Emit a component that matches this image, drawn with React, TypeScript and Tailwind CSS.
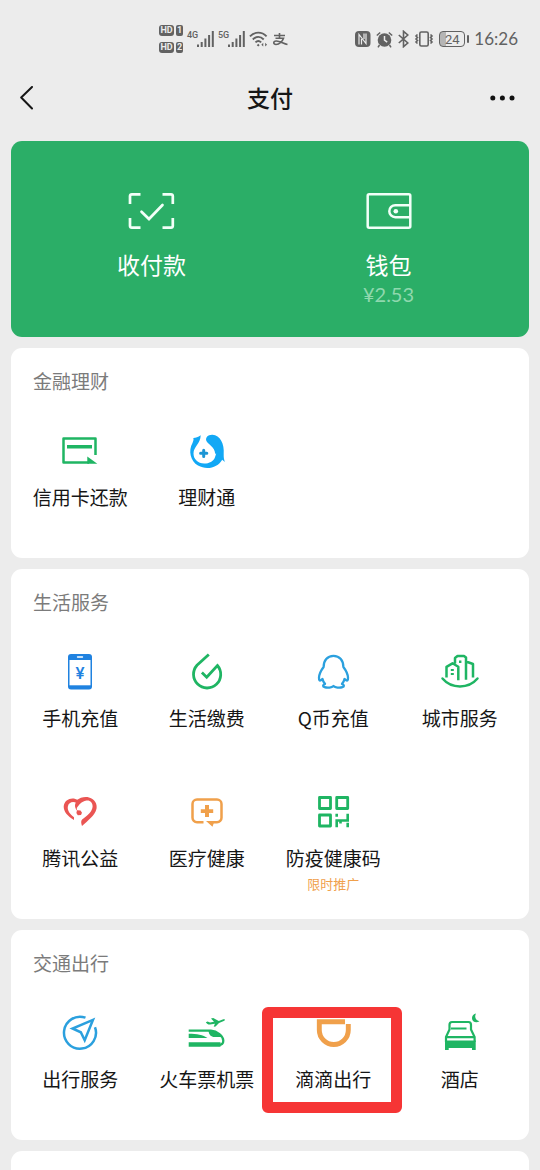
import React from "react";

const GREEN = "#1fb563";
const BLUE = "#2ba0de";
const ORANGE = "#f0a04b";

interface ServiceItem {
  name: string;
  icon: React.ReactNode;
  note?: string;
  marked?: boolean;
}

interface ServiceSection {
  title: string;
  items: ServiceItem[];
}

function Icon({ children }: { children: React.ReactNode }) {
  return (
    <svg className="h-10 w-10" viewBox="0 0 40 40" fill="none" aria-hidden="true">
      {children}
    </svg>
  );
}

const cardIcon = (
  <Icon>
    <path d="M35.500 24V7.500H3.500v24H29" stroke={GREEN} strokeWidth="2.500" strokeLinejoin="round" />
    <path d="M7 14h25v3.500H7zM27.300 25.500l10 7.300h-10z" fill={GREEN} />
  </Icon>
);

const fundIcon = (
  <Icon>
    <path
      d="M13.7 4.2C11 6 9 6.8 6.3 7c.6 1.6 0 3-.8 5C1 20 3.5 30 11 34.6c9 5.100 20 1.900 24.200-5.800l2.700 2.200c-1-2.500-1.300-5-1.200-8C37.600 13 33 4 25.500 3.800c-4.500-.2-7.200 2.700-6.200 5.900 1.300 3.500 8.700 5.800 8.900 13.300l1-.8c-.5 2-1 3.300-1.200 4-1.500 4-5.700 6.300-10.800 6.300-6.400 0-10.700-4.500-10.700-10C6.500 15.500 13.500 13 13.700 4.200z"
      fill="#12a8f5"
    />
    <path d="M16.700 19.200v6.200M13.600 22.300h6.200" stroke="#1c95d4" strokeWidth="3" strokeLinecap="round" />
  </Icon>
);

const phoneIcon = (
  <Icon>
    <rect x="8" y="2" width="24" height="35.400" rx="3" fill="#1f82e0" />
    <path d="M9.500 8h21v25.300h-21z" fill="#fff" />
    <path d="M17.500 5h5" stroke="#fff" strokeWidth="1.400" strokeLinecap="round" />
    <text x="20" y="26.500" textAnchor="middle" fontSize="17" fontWeight="500" fontFamily="Roboto, sans-serif" fill="#1f82e0">¥</text>
  </Icon>
);

const billIcon = (
  <Icon>
    <path d="M21.800 2.500L10 13.300a13.600 13.600 0 1 0 20.400.2L19.700 25.200l-4.800-4.600" stroke={GREEN} strokeWidth="2.800" />
  </Icon>
);

const penguinIcon = (
  <Icon>
    <path
      d="M20.500 3.800C14.300 3.800 10.600 8.500 10.600 15 8 18.500 6 22 6 25.800c0 2.500.7 3.200 1.800 2.500L9.500 27c.5 2.200 1.300 3.700 2.500 4.900-2.300 1-2.500 2.700-.5 3.300 3 .9 7.300.5 9-1.200 1.700 1.700 6 2.100 9 1.200 2-.6 1.800-2.300-.5-3.300 1.200-1.200 2-2.700 2.500-4.900l1.700 1.300c1.100.7 1.800 0 1.800-2.500 0-3.800-2-7.300-4.600-10.800 0-6.500-3.700-11.200-9.900-11.200z"
      stroke={BLUE}
      strokeWidth="2.300"
      strokeLinejoin="round"
    />
  </Icon>
);

const cityIcon = (
  <Icon>
    <path d="M2.500 26.500c9 10.600 26 10.600 35 0" stroke={GREEN} strokeWidth="2.500" strokeLinecap="round" />
    <path d="M6.500 25.500V14.800l6-3.500 5.800 3.500v13.500M15 11.500V6l2.500-2h6.500l2 1.500v22.300M26 9.500l7 2.500v13.500" stroke={GREEN} strokeWidth="2.500" strokeLinejoin="round" />
    <path d="M10.800 17h3v2h-3zM10.800 21h3v2h-3zM19 8.500h2.400v2.400H19z" fill={GREEN} />
  </Icon>
);

const heartIcon = (
  <Icon>
    <path d="M14 28C7.500 24 3.500 19.500 3.700 14.200 4.500 7.200 12.500 4.500 18 8.300l-1.500 2.700c-3.600-2-8-.6-8.700 3.700-.5 3.500 2 7.500 6.200 10.500z" fill="#ea5553" />
    <path d="M16.500 8.300C20 5.500 25 4.300 29 5.400c5.800 1.500 8.500 6.600 7.500 11.400C35 23.500 28 28.500 22 34c-.9-2.400-1.300-4.900.1-6.400 5.500-4.200 10-8 10.500-12.900.3-4.200-2.700-6.800-6.100-6.200-5.500 1-7.500 4.500-9.700 7.500 0 1.300.2 2.200.7 3-2.800-2.700-3.500-6.700-.8-9.500z" fill="#ea5553" />
    <path d="M17 18.300l3.500.2 1.500 2.300-1 2.200-3.200.2-1.400-2.200z" fill="#ea5553" />
  </Icon>
);

const medicalIcon = (
  <Icon>
    <path d="M16.500 30.200H10a4.500 4.500 0 0 1-4.500-4.500V12A4.500 4.500 0 0 1 10 7.500h20a4.500 4.500 0 0 1 4.500 4.500v13.700a4.500 4.500 0 0 1-4.500 4.500h-4" stroke={ORANGE} strokeWidth="2.500" />
    <path d="M19 29h8.500l-2 5.800zM18 13h4v4.200h4.200v3.900H22V25h-4v-3.900h-4.200v-3.900H18z" fill={ORANGE} />
  </Icon>
);

const qrIcon = (
  <Icon>
    <path d="M6.500 5.500h11v11h-11zM23.700 5.500h11v11h-11zM6.500 23h11v11h-11z" stroke={GREEN} strokeWidth="2.800" strokeLinejoin="round" />
    <path d="M23.700 21.700v3M23.700 35.300V28.500h11v-6.800M34.700 35.300v-4.500M27.500 28.500v3" stroke={GREEN} strokeWidth="2.600" />
  </Icon>
);

const travelIcon = (
  <Icon>
    <path d="M25.500 4.700a16 16 0 1 0 9.500 9.500" stroke={BLUE} strokeWidth="2.500" />
    <path d="M33 6.800L12.500 15.500l8.300 3.800 3.900 8z" stroke={BLUE} strokeWidth="2.500" />
  </Icon>
);

const trainIcon = (
  <Icon>
    <path d="M1.700 17.700H24c6 .3 12.300 5.500 12.300 10 0 2.600-1.500 4.300-4.800 4.300" stroke={GREEN} strokeWidth="2.300" />
    <path d="M1.700 29.200h31.800v4.500H1.700zM1.700 20.700c8 0 14.500 1 18.800 4.300H1.700zM21.500 18c6.500 0 10.500 2.300 13 6h-7c-3.500 0-5.500-2.300-6-6z" fill={GREEN} />
    <path d="M18.800 9.200l1.800-.8 2.400 1.200 4-.8-3-3.300 2.200-.4 5.600 2.800 4.500-1.600c2.200-.5 2.200.8.500 1.700l-4.800 2-3.500 3.500-1.800.2 1.200-2.900-4.900.7c-2 .1-3-.8-4.200-2.300z" fill={GREEN} />
  </Icon>
);

const didiIcon = (
  <Icon>
    <path d="M32 8.800H6.300V17a14.500 14.500 0 0 0 29 0v-6" stroke={ORANGE} strokeWidth="4.900" />
  </Icon>
);

const hotelIcon = (
  <Icon>
    <path d="M6 29v-5l3.500-7.500v-4.700C9.500 10 10.500 9 12 9h16.500c1.500 0 2.500 1 2.500 2.800v4.700l3.600 7.500v5M6 24.200h28.500M11 15.500h15.500" stroke={GREEN} strokeWidth="2.200" />
    <path d="M5 27.500h30.700V37H32v-2H8.700v2H5zM36 .5c-1.800 3.600-.5 6.700 3.500 7.700-3 2-7.500.8-7.500-3C32 2.600 33.700.9 36 .5z" fill={GREEN} />
  </Icon>
);

const sections: ServiceSection[] = [
  {
    title: "金融理财",
    items: [
      { name: "信用卡还款", icon: cardIcon },
      { name: "理财通", icon: fundIcon },
    ],
  },
  {
    title: "生活服务",
    items: [
      { name: "手机充值", icon: phoneIcon },
      { name: "生活缴费", icon: billIcon },
      { name: "Q币充值", icon: penguinIcon },
      { name: "城市服务", icon: cityIcon },
      { name: "腾讯公益", icon: heartIcon },
      { name: "医疗健康", icon: medicalIcon },
      { name: "防疫健康码", icon: qrIcon, note: "限时推广" },
    ],
  },
  {
    title: "交通出行",
    items: [
      { name: "出行服务", icon: travelIcon },
      { name: "火车票机票", icon: trainIcon },
      { name: "滴滴出行", icon: didiIcon, marked: true },
      { name: "酒店", icon: hotelIcon },
    ],
  },
];

function SimBadge({ slot }: { slot: string }) {
  return (
    <div className="flex gap-[2px] font-['Roboto',sans-serif] text-[9px] leading-[11px] font-bold text-[#ececec]">
      <span className="w-[15px] rounded-[3px] bg-[#626262] text-center">HD</span>
      <span className="w-[7px] rounded-[2px] bg-[#626262] text-center">{slot}</span>
    </div>
  );
}

function Signal({ label }: { label: string }) {
  return (
    <div className="flex items-start">
      <span className="w-[10px] font-['Roboto',sans-serif] text-[9px] leading-[8px] font-medium">{label}</span>
      <svg className="h-4 w-[17px]" viewBox="0 0 17 16" fill="currentColor" aria-hidden="true">
        <path d="M0 13.500h2V16H0zM3.700 11h2v5h-2zM7.400 7.500h2V16h-2zM11.100 4h2v12h-2zM14.800 0h2v16h-2z" />
      </svg>
    </div>
  );
}

function StatusBar() {
  return (
    <div className="flex h-[78px] items-center justify-between pr-[22px] pl-[159px] text-[#626262]">
      <div className="flex items-center gap-1">
        <div className="flex flex-col gap-[6px]">
          <SimBadge slot="1" />
          <SimBadge slot="2" />
        </div>
        <Signal label="4G" />
        <Signal label="5G" />
        <svg className="h-[18px] w-[19px]" viewBox="0 0 20 18" fill="none" stroke="currentColor" aria-hidden="true">
          <path d="M1 6.200c5-5.200 12.500-5.200 17.500 0M4 9.500c3.500-3.500 8-3.500 11.500 0M6.800 12.600c2-2 4-2 6 0" strokeWidth="2" />
          <path d="M9.700 14l1.500 1.500-1.500 1.500-1.500-1.500zM15 13v4l-2-2zM17 13v4l2-2z" fill="currentColor" stroke="none" />
        </svg>
        {/* payment app mark */}
        <svg className="h-4 w-4" viewBox="0 0 16 16" fill="none" stroke="currentColor" strokeWidth="1.600" aria-hidden="true">
          <path d="M2 4.500h11M7.500 2v4.500M3.500 7.200h8c-1 3-4 6.300-7.500 6.300-3 0-3-3.300.2-3.500 3.300-.2 7 2.500 11.300 3.500" />
        </svg>
      </div>
      <div className="flex items-center gap-[5px]">
        <svg className="h-4 w-4" viewBox="0 0 16 16" aria-hidden="true">
          <rect width="15.500" height="16" rx="4" fill="currentColor" />
          <path d="M4 13.500V3.500l7 9V2.500M6.500 13.500V8M9 2.500V8" fill="none" stroke="#ececec" strokeWidth="1.200" />
        </svg>
        <svg className="h-[17px] w-[17px]" viewBox="0 0 17 17" aria-hidden="true">
          <circle cx="8.500" cy="9" r="6.800" fill="currentColor" />
          <path d="M.8 4.500l3.400-3M16.200 4.500l-3.400-3M3.500 14l-1.500 2.300M13.500 14l1.500 2.300" stroke="currentColor" strokeWidth="1.500" />
          <path d="M8.500 5v4.200l2.700 2" fill="none" stroke="#ececec" strokeWidth="1.500" />
        </svg>
        <svg className="h-[18px] w-[11px]" viewBox="0 0 11 18" fill="none" stroke="currentColor" strokeWidth="1.600" aria-hidden="true">
          <path d="M.8 5l9 8-4.300 3.700V1.300L9.800 5l-9 8" />
        </svg>
        <svg className="h-4 w-5" viewBox="0 0 20 16" fill="none" stroke="currentColor" strokeWidth="1.600" aria-hidden="true">
          <rect x="5.800" y="1" width="8.400" height="14" rx="1.500" />
          <path d="M3.500 3.500L2 5l1.500 1.500L2 8l1.500 1.500L2 11l1.500 1.500M16.500 3.500L18 5l-1.500 1.500L18 8l-1.500 1.500L18 11l-1.500 1.500" />
        </svg>
        <div className="flex items-center gap-[2px]">
          <span className="h-4 w-[26px] rounded-[4px] border border-[#626262] bg-linear-to-r from-[#b5b5b5] from-24% to-transparent to-24% text-center font-['Roboto',sans-serif] text-[13px] leading-[15px]">
            24
          </span>
          <span className="h-2 w-[2px] rounded-full bg-[#626262]" />
        </div>
        <span className="font-['Lato',sans-serif] text-[17px] leading-6">16:26</span>
      </div>
    </div>
  );
}

function ServiceCell({ item }: { item: ServiceItem }) {
  return (
    <a href="#" className="relative flex h-[140px] flex-col items-center pt-[13px]">
      {item.icon}
      <span className="mt-3 text-[19px] leading-7 whitespace-nowrap text-[#161616]">{item.name}</span>
      {item.note && <span className="mt-[2px] text-[13px] leading-5 text-[#f0a04b]">{item.note}</span>}
      {item.marked && (
        <span className="absolute top-[7px] right-[-5px] left-[-8px] h-[106px] rounded-[6px] border-[11px] border-[#f63535]" />
      )}
    </a>
  );
}

export default function App() {
  return (
    <div className="min-h-screen bg-[#ececec] font-['Noto_Sans_CJK_SC',sans-serif]">
      <StatusBar />

      <header className="flex h-10 items-center justify-between px-5">
        <button type="button" aria-label="返回" className="w-8">
          <svg className="h-6 w-[14px]" viewBox="0 0 14 24" fill="none" stroke="#161616" strokeWidth="2" strokeLinecap="round" strokeLinejoin="round" aria-hidden="true">
            <path d="M12 1L1.200 11.500 12 22.500" />
          </svg>
        </button>
        <h1 className="pb-[2px] text-[23px] leading-8 font-medium text-[#161616]">支付</h1>
        <button type="button" aria-label="更多" className="flex w-8 justify-end">
          <svg className="h-2 w-8" viewBox="0 0 32 8" fill="#111" aria-hidden="true">
            <circle cx="4.800" cy="4" r="2.500" />
            <circle cx="14.400" cy="4" r="2.500" />
            <circle cx="24" cy="4" r="2.500" />
          </svg>
        </button>
      </header>

      <main className="mt-[23px] flex flex-col gap-[11px] px-[11px]">
        <section className="grid h-[196px] grid-cols-2 rounded-[11px] bg-[#2bae67] px-[22px] text-white">
          <a href="#" className="flex flex-col items-center pt-[50px]">
            <svg className="h-10 w-12" viewBox="0 0 48 40" fill="none" stroke="#f2fff8" strokeWidth="2.700" aria-hidden="true">
              <path d="M2 13V5a1.800 1.800 0 0 1 1.800-1.700H12.500M34.500 3.300H43A1.800 1.800 0 0 1 44.800 5v8M44.800 27v8a1.800 1.800 0 0 1-1.800 1.700h-8.500M12.500 36.700H3.800A1.800 1.800 0 0 1 2 35v-8" />
              <path d="M13.500 20.700l7.500 7.300 13.500-14" strokeLinecap="round" />
            </svg>
            <span className="mt-[17px] text-[23px] leading-8">收付款</span>
          </a>
          <a href="#" className="flex flex-col items-center pt-[50px]">
            <svg className="h-10 w-12" viewBox="0 0 48 40" fill="none" stroke="#f2fff8" strokeWidth="2.500" aria-hidden="true">
              <rect x="2.700" y="3.200" width="42.600" height="33.600" rx="1.500" />
              <path d="M45.300 14.200H30.300a6 6 0 0 0 0 12h15" />
              <circle cx="30.800" cy="20.200" r="2.300" fill="#f2fff8" stroke="none" />
            </svg>
            <span className="mt-[17px] text-[23px] leading-8">钱包</span>
            <span className="font-['Lato',sans-serif] text-[20px] leading-7 text-[#8fd8ae]">¥2.53</span>
          </a>
        </section>

        {sections.map((section) => (
          <section key={section.title} className="rounded-[11px] bg-white px-[6px]">
            <h2 className="h-[70px] px-4 pt-[19px] text-[19px] leading-7 text-[#7b7b7b]">{section.title}</h2>
            <div className="grid grid-cols-4">
              {section.items.map((item) => (
                <ServiceCell key={item.name} item={item} />
              ))}
            </div>
          </section>
        ))}

        {/* next group, only its top edge is on screen */}
        <div className="h-[19px] rounded-t-[11px] bg-white" />
      </main>
    </div>
  );
}
